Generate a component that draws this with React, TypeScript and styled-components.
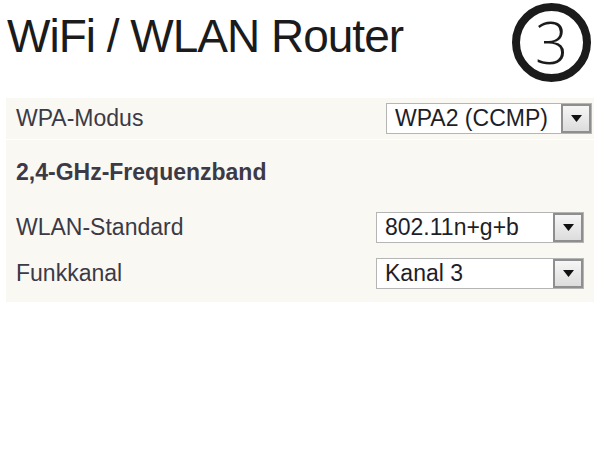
import styled, { createGlobalStyle } from 'styled-components'

const GlobalStyle = createGlobalStyle`
  html, body {
    margin: 0;
    padding: 0;
    background: #ffffff;
  }
  body {
    font-family: "Liberation Sans", Arial, sans-serif;
  }
`

const Page = styled.div`
  width: 600px;
  height: 450px;
  background: #ffffff;
  overflow: hidden;
`

const Header = styled.header`
  display: flex;
  justify-content: space-between;
  align-items: flex-start;
  height: 98px;
  padding: 0 9px 0 7px;
  box-sizing: border-box;
`

const Title = styled.h1`
  margin: 13px 0 0;
  font-size: 46px;
  line-height: 46px;
  font-weight: 400;
  letter-spacing: -1px;
  color: #1b1b1b;
`

const StepBadge = styled.div`
  margin-top: 3px;
  width: 79px;
  height: 79px;
  box-sizing: border-box;
  border: 8px solid #1b1b1b;
  border-radius: 50%;
  display: flex;
  align-items: center;
  justify-content: center;
  font-family: "Open Sans", "Liberation Sans", sans-serif;
  font-weight: 300;
  font-size: 58px;
  line-height: 1;
  color: #1b1b1b;
  padding-bottom: 2px;
`

const Panel = styled.section`
  margin: 0 6px;
  background: #faf8f3;
  padding-bottom: 6px;
`

const Row = styled.div<{ $height: number; $right: number }>`
  display: flex;
  align-items: center;
  justify-content: space-between;
  height: ${(p) => p.$height}px;
  padding: 0 ${(p) => p.$right}px 0 10px;
`

const Divider = styled.div`
  height: 1px;
  background: #ffffff;
`

const Label = styled.span<{ $bold?: boolean }>`
  font-size: 23px;
  font-weight: ${(p) => (p.$bold ? 700 : 400)};
  color: #3b3a46;
`

const Select = styled.div<{ $width: number }>`
  display: flex;
  width: ${(p) => p.$width}px;
  height: 31px;
  box-sizing: border-box;
  border: 1px solid #b5b5b5;
  background: #ffffff;
`

const SelectValue = styled.span`
  flex: 1;
  padding-left: 8px;
  font-size: 23px;
  line-height: 29px;
  color: #1e1e28;
  white-space: nowrap;
  overflow: hidden;
`

const ArrowButton = styled.div`
  width: 30px;
  box-sizing: border-box;
  border: 2px solid #8e8e8e;
  background: linear-gradient(#f6f6f6, #dcdcdc);
  display: flex;
  align-items: center;
  justify-content: center;
`

const Caret = () => (
  <svg width="11" height="7" viewBox="0 0 11 7">
    <path d="M0 0h11L5.5 7z" fill="#111" />
  </svg>
)

const Dropdown = ({ value, width }: { value: string; width: number }) => (
  <Select $width={width}>
    <SelectValue>{value}</SelectValue>
    <ArrowButton>
      <Caret />
    </ArrowButton>
  </Select>
)

const App = () => {
  return (
    <>
      <GlobalStyle />
      <Page>
        <Header>
          <Title>WiFi / WLAN Router</Title>
          <StepBadge>3</StepBadge>
        </Header>
        <Panel>
          <Row $height={41} $right={2}>
            <Label>WPA-Modus</Label>
            <Dropdown value="WPA2 (CCMP)" width={206} />
          </Row>
          <Divider />
          <Row $height={64} $right={10}>
            <Label $bold>2,4-GHz-Frequenzband</Label>
          </Row>
          <Row $height={46} $right={10}>
            <Label>WLAN-Standard</Label>
            <Dropdown value="802.11n+g+b" width={208} />
          </Row>
          <Row $height={46} $right={10}>
            <Label>Funkkanal</Label>
            <Dropdown value="Kanal 3" width={208} />
          </Row>
        </Panel>
      </Page>
    </>
  )
}

export default App
